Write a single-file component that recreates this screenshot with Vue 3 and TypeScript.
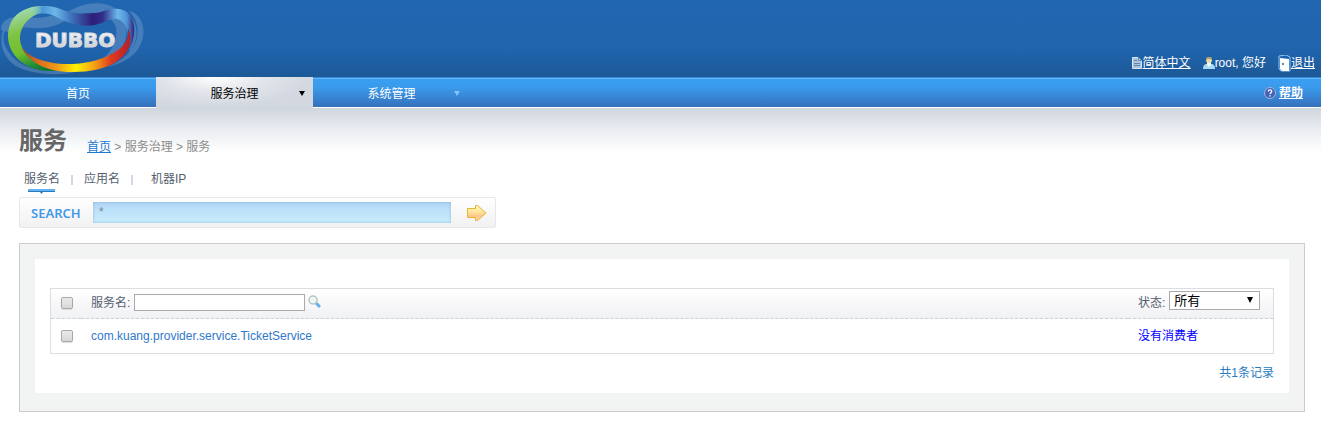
<script setup lang="ts">
import { computed, ref } from 'vue'

interface Service {
  name: string
  status: string
}

const services = ref<Service[]>([
  { name: 'com.kuang.provider.service.TicketService', status: '没有消费者' },
])
const keyword = ref('*')
const nameFilter = ref('')
const selected = ref<string[]>([])
const allSelected = computed({
  get: () => services.value.length > 0 && selected.value.length === services.value.length,
  set: (on: boolean) => {
    selected.value = on ? services.value.map((s) => s.name) : []
  },
})
</script>

<template>
  <div class="page">
    <header class="header">
      <a class="logo" href="#" aria-label="DUBBO">
        <svg width="146" height="77" viewBox="0 0 146 77">
          <defs>
            <linearGradient id="green" x1="0.3" y1="0" x2="0.6" y2="1">
              <stop offset="0" stop-color="#a5dcc0" />
              <stop offset=".35" stop-color="#80c342" />
              <stop offset=".65" stop-color="#70c02f" />
              <stop offset=".9" stop-color="#1f8a35" />
              <stop offset="1" stop-color="#167538" />
            </linearGradient>
            <linearGradient id="top" x1="0" y1="0" x2="1" y2="0">
              <stop offset="0" stop-color="#8ed0d8" stop-opacity="0" />
              <stop offset=".12" stop-color="#4b97d6" />
              <stop offset=".24" stop-color="#6cb8ea" />
              <stop offset=".4" stop-color="#3d70ba" />
              <stop offset=".6" stop-color="#2d1e78" />
              <stop offset=".7" stop-color="#2f2f8a" />
              <stop offset=".84" stop-color="#6db9ec" />
              <stop offset=".93" stop-color="#4f92d4" />
              <stop offset="1" stop-color="#302276" />
            </linearGradient>
            <linearGradient id="bottom" x1="0" y1="0" x2="1" y2="0">
              <stop offset="0" stop-color="#8d4a2e" />
              <stop offset=".15" stop-color="#dc6a22" />
              <stop offset=".32" stop-color="#f09a17" />
              <stop offset=".5" stop-color="#fff200" />
              <stop offset=".68" stop-color="#f29a17" />
              <stop offset=".82" stop-color="#dd3a1f" />
              <stop offset="1" stop-color="#b51d2a" />
            </linearGradient>
            <linearGradient id="letters" x1="0" y1="0" x2="0" y2="1">
              <stop offset="0" stop-color="#ffffff" />
              <stop offset="1" stop-color="#c2c5ca" />
            </linearGradient>
          </defs>
          <g fill="#9fb9da" opacity=".3">
            <path d="M1 30C1 20 10 16 24 17C40 19 50 17 60 12L66 20C58 26 44 29 34 28C24 27 12 27 8 32Z" />
            <path d="M9 27C1 32 2 44 10 54C20 67 38 72 62 71L86 69C70 76 38 76 20 68C2 60-2 40 4 28Z" />
            <path d="M68 12C80 4 96 1 108 5C122 9 128 22 126 36C124 49 116 57 100 61C112 52 118 40 116 28C113 15 98 10 80 14Z" />
            <path d="M129 11C140 13 145 25 143 37C140 53 126 63 107 67C124 60 134 50 137 38C139 27 136 18 129 11Z" />
            <path d="M132 18C139 29 138 42 129 53L132 38Z" />
          </g>
          <path d="M46 6C20 5 8 19 8 36C8 54 24 70 48 71H62C44 68 28 59 22 47C16 34 24 17 43 12L54 9Z" fill="url(#green)" />
          <path d="M21 47C29 57 43 63 64 64C90 65 116 56 125 43C128 38 129 33 128 28C134 37 131 50 120 59C108 69 90 72 72 72C46 72 29 62 21 47Z" fill="url(#bottom)" />
          <path d="M30 9C42 4 53 6 63 10C76 15 90 14 101 12C113 8 122 7 129 14C137 23 135 39 129 51C131 42 131 34 128 28L128 38C129 31 124 20 117 19C110 18 104 23 95 25C82 27 70 24 60 19C50 13 42 12 30 16Z" fill="url(#top)" />
          <text class="logo-text" x="35" y="47" fill="url(#letters)">DUBBO</text>
        </svg>
      </a>
      <div class="user-bar">
        <a class="user-link" href="#">
          <svg width="12" height="14" viewBox="0 0 12 14">
            <path d="M1.500 1.500H7L10.500 5V12.500H1.500Z" fill="#a9c4df" stroke="#d8e5f1" />
            <path d="M7.500 1V4.500H11M3 4.500H6M3 7.500H9M3 9.500H9" fill="none" stroke="#6386ac" />
          </svg><span class="underlined">简体中文</span>
        </a>
        <span class="user-link">
          <svg width="12" height="14" viewBox="0 0 12 14">
            <path d="M0 13C0 9 2 8 4 8H8C11 8 12 10 12 13Z" fill="#a7dcf5" />
            <path d="M4 6H8V9L6 11L4 9Z" fill="#f6f7ed" />
            <circle cx="6" cy="4" r="3" fill="#eadba8" />
            <path d="M3 4C2 0 10 0 9 4L7 3H5Z" fill="#a99b75" />
          </svg><span>root, 您好</span>
        </span>
        <a class="user-link" href="#">
          <svg width="13" height="17" viewBox="0 0 13 17">
            <path d="M1 1L8 0L12 2V16H3L1 14Z" fill="#1e60aa" stroke="#92c5f3" />
            <path d="M2 3L11 4V16H4L2 14Z" fill="#fff" />
            <path d="M4 9H6M5 8V10" stroke="#2266a8" />
          </svg><span class="underlined">退出</span>
        </a>
      </div>
    </header>

    <nav class="nav">
      <a class="nav-item" href="#">首页</a>
      <a class="nav-item active" href="#">服务治理<span class="caret"></span></a>
      <a class="nav-item" href="#">系统管理<span class="caret"></span></a>
      <a class="help" href="#">
        <svg width="12" height="12" viewBox="0 0 12 12">
          <circle cx="6" cy="6" r="5.500" fill="#4262ba" stroke="#a4b3d8" />
          <path d="M4.200 4.500C4.400 2.300 8 2.500 7.700 4.600C7.500 5.700 6 5.700 6 7.200M6 8.300V9.500" fill="none" stroke="#fff" stroke-width="1.300" />
        </svg><span class="underlined">帮助</span>
      </a>
    </nav>

    <main class="main">
      <div class="heading">
        <h1>服务</h1>
        <p class="crumbs"><a href="#">首页</a> &gt; 服务治理 &gt; 服务</p>
      </div>

      <div class="tabs">
        <a class="tab current" href="#">服务名
          <svg class="marker" width="27" height="5" viewBox="0 0 27 5">
            <path d="M0 0H27V2H0Z" fill="#63b2f3" />
            <path d="M0 2H27V3H15L13.500 5L12 3H0Z" fill="#287bbd" />
          </svg>
        </a>
        <a class="tab" href="#">应用名</a>
        <a class="tab last" href="#">机器IP</a>
      </div>

      <form class="search" @submit.prevent>
        <label for="keyword">SEARCH</label>
        <input id="keyword" v-model="keyword" type="text" />
        <button type="submit" aria-label="SEARCH">
          <svg width="20" height="16" viewBox="0 0 20 16">
            <defs>
              <linearGradient id="gold" x1="0" y1="0" x2="0" y2="1">
                <stop offset="0" stop-color="#fffbb0" />
                <stop offset=".45" stop-color="#ffe39a" />
                <stop offset=".7" stop-color="#ffc48b" />
                <stop offset="1" stop-color="#ffe18b" />
              </linearGradient>
            </defs>
            <path d="M.5 3.500H8.500V.5H10.500L19 8L10.500 15.500H8.500V12.500H.5Z" fill="url(#gold)" stroke="#e4b33b" stroke-linejoin="round" />
          </svg>
        </button>
      </form>

      <section class="panel">
        <div class="panel-body">
          <table class="services">
            <thead>
              <tr>
                <th class="check"><input v-model="allSelected" type="checkbox" aria-label="所有" /></th>
                <th>
                  <div class="filter">
                    <label for="name-filter">服务名:</label>
                    <input id="name-filter" v-model="nameFilter" type="text" />
                    <button type="button" aria-label="服务名">
                      <svg width="13" height="13" viewBox="0 0 13 13">
                        <path d="M8 8L12 12" stroke="#62afe6" stroke-width="3" />
                        <circle cx="5" cy="5" r="4" fill="#edf6f4" stroke="#b4c6c4" stroke-width="1.500" />
                        <path d="M3 4L5 2" stroke="#fff" />
                      </svg>
                    </button>
                  </div>
                </th>
                <th class="status">
                  <div class="filter">
                    <label for="status-filter">状态:</label>
                    <span class="select-wrap">
                      <select id="status-filter">
                        <option>所有</option>
                      </select>
                      <span class="select-arrow"></span>
                    </span>
                  </div>
                </th>
              </tr>
            </thead>
            <tbody>
              <tr v-for="service in services" :key="service.name">
                <td class="check">
                  <input v-model="selected" type="checkbox" :value="service.name" :aria-label="service.name" />
                </td>
                <td><a href="#">{{ service.name }}</a></td>
                <td class="status no-consumer">{{ service.status }}</td>
              </tr>
            </tbody>
          </table>
          <p class="total">共{{ services.length }}条记录</p>
        </div>
      </section>
    </main>
  </div>
</template>

<style>
body {
  margin: 0;
  background: #fff;
}
</style>

<style scoped>
* {
  box-sizing: border-box;
}
.page {
  font: 12px/18px "Liberation Sans", "Noto Sans CJK SC", sans-serif;
  color: #54606e;
}
svg {
  display: block;
  flex: none;
}
.header {
  display: flex;
  justify-content: space-between;
  align-items: flex-end;
  height: 77px;
  background: linear-gradient(#2166b0, #2064ad 65%, #1c5896);
}
.logo-text {
  font: bold 20px "DejaVu Sans", sans-serif;
  stroke: #d9dbdf;
  stroke-width: 1px;
}
.user-bar {
  display: flex;
  gap: 12px;
  padding: 0 6px 5px 0;
}
.user-link {
  display: flex;
  align-items: center;
  color: #fff;
  text-decoration: none;
}
.underlined {
  text-decoration: underline;
}
.nav {
  display: flex;
  height: 31px;
  border-bottom: 1px solid #fff;
  background: linear-gradient(#3288d9 0 1px, #67b7f7 1px 2px, #3a9ff2 2px, #3a9aeb 35%, #3670bb);
}
.nav-item {
  position: relative;
  width: 157px;
  padding-top: 2px;
  line-height: 30px;
  text-align: center;
  color: #fff;
  text-decoration: none;
}
.nav-item:first-child {
  width: 156px;
}
.nav-item.active {
  height: 31px;
  color: #000;
  background: radial-gradient(ellipse at 38% 0, #fff, #e2e5ea 35%, #d2d7e0 70%);
}
.caret {
  position: absolute;
  top: 14px;
  right: 10px;
  border: 3px solid transparent;
  border-top: 5px solid #83c5f8;
  border-bottom: 0;
}
.active .caret {
  right: 8px;
  border-top-color: #000;
}
.help {
  display: flex;
  align-items: center;
  gap: 3px;
  margin-left: auto;
  padding: 2px 18px 0 0;
  font-weight: bold;
  color: #fff;
}
.main {
  padding: 17px 16px 18px 19px;
  background: linear-gradient(#d0d6de, #e6e9ee 18px, #fff 44px);
}
.heading {
  display: flex;
  align-items: flex-end;
  gap: 20px;
  height: 31px;
}
h1 {
  margin: 0;
  font-size: 24px;
  line-height: 30px;
  color: #666;
}
.crumbs {
  margin: 0;
  color: #8c8c8c;
}
.crumbs a {
  color: #1e78d2;
}
.tabs {
  display: flex;
  height: 27px;
  margin-top: 14px;
  padding-left: 5px;
}
.tab {
  position: relative;
  height: 18px;
  margin-right: 24px;
  color: #54606e;
  text-decoration: none;
}
.tab:not(.last)::after {
  content: "";
  position: absolute;
  top: 5px;
  right: -13px;
  width: 2px;
  height: 10px;
  background: #d5d6df;
}
.tab.last {
  margin: 0 0 0 7px;
}
.marker {
  position: absolute;
  top: 19px;
  left: 4px;
}
.search {
  display: flex;
  align-items: center;
  width: 477px;
  height: 31px;
  border: 1px solid #e8e8ea;
  border-radius: 2px;
  background: linear-gradient(#fff, #f1f1f1);
}
.search label {
  width: 73px;
  padding-left: 11px;
  font: 600 13px/18px "Noto Sans", "Open Sans", sans-serif;
  color: #4298ea;
}
.search input {
  width: 358px;
  height: 21px;
  padding: 0 6px 2px;
  border: 0;
  outline: 0;
  font: 12px/18px "Liberation Sans", sans-serif;
  color: #7d8791;
  background: linear-gradient(#b0d3f3, #bbe0f9 35%, #caecfc);
  box-shadow: inset 0 0 3px #8bb9d8;
}
button {
  padding: 0;
  border: 0;
  background: none;
}
.search button {
  margin-left: 16px;
}
.panel {
  margin-top: 15px;
  padding: 15px 15px 18px;
  border: 1px solid #ccc;
  background: #f2f4f4;
}
.panel-body {
  padding: 29px 15px 11px;
  background: #fff;
}
.services {
  width: 100%;
  border: 1px solid #dcdde0;
  border-spacing: 0;
}
th,
td {
  padding: 0 10px;
  text-align: left;
  font-weight: normal;
}
th {
  height: 30px;
  padding-bottom: 2px;
  border-bottom: 1px dashed #ccd0d2;
}
thead {
  background: linear-gradient(#fff, #f0f1f4);
}
td {
  height: 34px;
}
.check {
  width: 30px;
  padding-right: 8px;
}
.check input {
  display: block;
  appearance: none;
  width: 12px;
  height: 12px;
  margin: 0;
  border: 1px solid #a8a8a8;
  border-radius: 2px;
  background: linear-gradient(#e9e9e9, #d8d8d8);
  box-shadow: 0 1px 1px #ddd;
}
.check input:checked {
  background: #3875d7;
}
.status {
  width: 145px;
}
.filter {
  display: flex;
  align-items: center;
}
.filter input {
  width: 171px;
  height: 17px;
  margin: 0 3px 0 4px;
  padding: 0 2px;
  border: 1px solid #aaa;
}
.filter button {
  margin-bottom: 2px;
}
.select-wrap {
  position: relative;
  width: 91px;
  margin: 0 0 4px 4px;
}
select {
  display: block;
  appearance: none;
  width: 100%;
  height: 19px;
  padding: 0 4px;
  border: 1px solid #aaa;
  border-radius: 0;
  font: 13px/17px "Liberation Sans", "Noto Sans CJK SC", sans-serif;
  color: #000;
  background: #fff;
}
.select-arrow {
  position: absolute;
  top: 6px;
  right: 7px;
  border: 3px solid transparent;
  border-top: 6px solid #000;
  border-bottom: 0;
  pointer-events: none;
}
td a {
  color: #2f78cb;
  text-decoration: none;
}
.no-consumer {
  color: #00f;
}
.total {
  margin: 10px 0 0;
  text-align: right;
  color: #287bbd;
}
</style>
